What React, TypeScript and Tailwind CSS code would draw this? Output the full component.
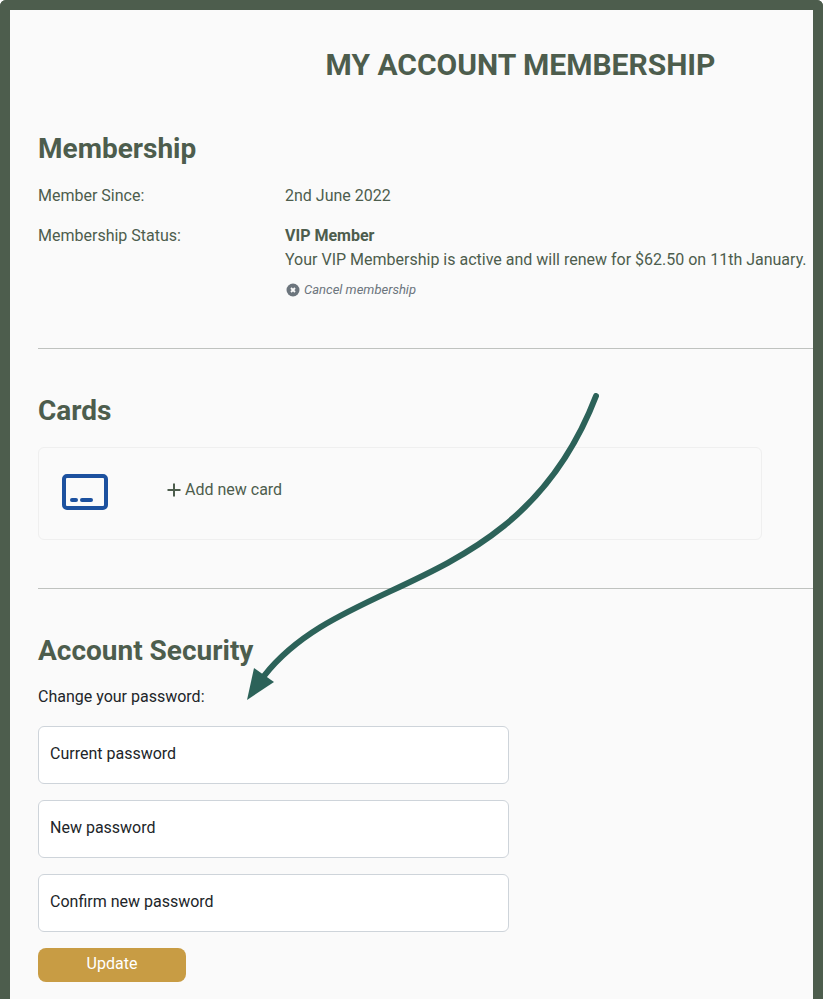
import type { ReactNode } from "react";

function SectionTitle({ children }: { children: ReactNode }) {
  return <h2 className="text-[28px] leading-8 font-bold text-[#4d5d4d]">{children}</h2>;
}

function PasswordField({ id, label }: { id: string; label: string }) {
  return (
    <div className="relative">
      <input
        id={id}
        type="password"
        placeholder=" "
        className="peer block h-[58px] w-full rounded-md border border-[#ced4da] bg-white px-3 pt-5 text-base text-[#212529] outline-none focus:border-[#4d5d4d]"
      />
      <label
        htmlFor={id}
        className="pointer-events-none absolute top-4 left-3 text-base leading-6 text-[#212529] peer-focus:top-1 peer-focus:text-xs peer-[:not(:placeholder-shown)]:top-1 peer-[:not(:placeholder-shown)]:text-xs"
      >
        {label}
      </label>
    </div>
  );
}

function CardIcon() {
  return (
    <svg width="46" height="36" viewBox="0 0 46 36" fill="none" stroke="#1c519f" aria-hidden="true">
      <rect x="2" y="2" width="42" height="32" rx="3" strokeWidth="4" />
      <path d="M10 26h4M20 26h9" strokeWidth="4" strokeLinecap="round" />
    </svg>
  );
}

function Arrow() {
  return (
    <svg
      className="pointer-events-none absolute top-[383px] left-[237px]"
      width="356"
      height="310"
      viewBox="247 393 356 310"
      fill="none"
      aria-hidden="true"
    >
      <path
        d="M596 396C520 594 345 572 264 676"
        stroke="#2c6259"
        strokeWidth="6"
        strokeLinecap="round"
      />
      <path d="M247 700L254 668L274 682Z" fill="#2c6259" />
    </svg>
  );
}

export default function App() {
  return (
    <div className="bg-white font-[Roboto,'Liberation_Sans',sans-serif]">
      <div className="relative min-h-screen overflow-hidden rounded-t-md border-x-10 border-t-10 border-[#4d5d4d] bg-[#fafafa] pb-4 pl-7 text-base leading-6 text-[#4d5d4d]">
        <h1 className="mt-[35px] pl-[190px] text-center text-[30px] leading-10 font-bold">
          MY ACCOUNT MEMBERSHIP
        </h1>

        <section className="mt-12">
          <SectionTitle>Membership</SectionTitle>
          <dl className="mt-[19px] grid grid-cols-[247px_1fr] gap-y-4">
            <dt>Member Since:</dt>
            <dd>2nd June 2022</dd>
            <dt>Membership Status:</dt>
            <dd>
              <strong className="block font-bold">VIP Member</strong>
              <p className="whitespace-nowrap">
                Your VIP Membership is active and will renew for $62.50 on 11th January.
              </p>
              <button
                type="button"
                className="mt-2 flex items-center gap-1 text-[13px] leading-5 text-[#6c757d] italic"
              >
                <svg className="ml-px" width="14" height="14" viewBox="0 0 14 14" aria-hidden="true">
                  <circle cx="7" cy="7" r="6.5" fill="#6c757d" />
                  <path d="M5 5l4 4M9 5L5 9" stroke="#fafafa" strokeWidth="1.8" />
                </svg>
                Cancel membership
              </button>
            </dd>
          </dl>
        </section>

        <hr className="mt-12 border-t border-[#bfc2bf]" />

        <section className="mt-[46px]">
          <SectionTitle>Cards</SectionTitle>
          <div className="mt-5 mr-[51px] flex h-[93px] items-start rounded-md border border-[#efefef] pt-[26px] pl-[23px]">
            <CardIcon />
            <button type="button" className="mt-1 ml-[59px] flex items-center gap-1">
              <svg width="14" height="14" viewBox="0 0 14 14" stroke="#4d5d4d" strokeWidth="2" aria-hidden="true">
                <path d="M7 0.5v13M0.5 7h13" />
              </svg>
              Add new card
            </button>
          </div>
        </section>

        <hr className="mt-12 border-t border-[#bfc2bf]" />

        <section className="mt-[46px]">
          <SectionTitle>Account Security</SectionTitle>
          <form className="mt-[18px]">
            <p className="text-[#212529]">Change your password:</p>
            <div className="mt-[17px] flex max-w-[471px] flex-col gap-4">
              <PasswordField id="current-password" label="Current password" />
              <PasswordField id="new-password" label="New password" />
              <PasswordField id="confirm-password" label="Confirm new password" />
            </div>
            <button
              type="button"
              className="mt-4 h-[34px] w-[148px] rounded-lg bg-[#c89c44] pb-0.5 text-white"
            >
              Update
            </button>
          </form>
        </section>

        <Arrow />
      </div>
    </div>
  );
}
